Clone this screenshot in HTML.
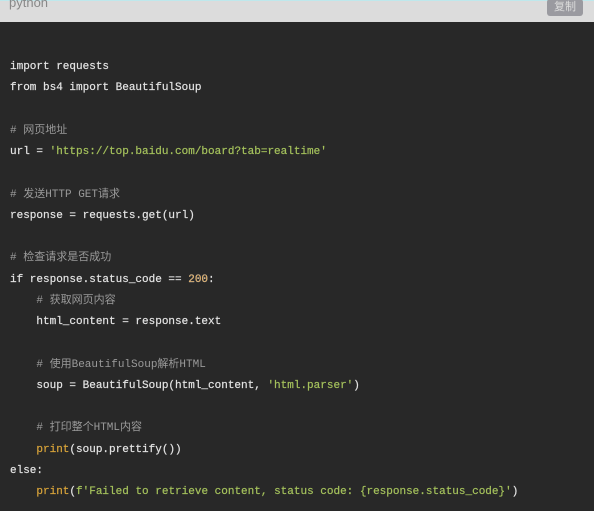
<!DOCTYPE html>
<html><head><meta charset="utf-8"><style>
html,body{margin:0;padding:0;width:600px;height:515px;background:#fff;overflow:hidden}
.hd{position:absolute;left:0;top:0;width:594px;height:21px;background:#dcdcdc;border-top:1px solid #bfe8ec}
.hd .l{position:absolute;left:9px;top:-6px;font:13px "Liberation Sans",sans-serif;color:#888}
.hd .b{position:absolute;left:547px;top:-2px;width:36px;height:17px;background:#9a9aa0;border-radius:3px;color:#ddd;font:11px "Noto Sans CJK SC",sans-serif;text-align:center;line-height:14px}
.code{position:absolute;left:0;top:22px;width:594px;height:489px;background:#282828}
pre{margin:0;position:absolute;left:10px;top:57px;font:11px/21.25px "Liberation Mono","Noto Sans CJK SC",monospace;color:#e4e4e4;-webkit-text-stroke:0.2px #e4e4e4}
.c{color:#9a9a9a;-webkit-text-stroke:0}.s{color:#a5c25c;-webkit-text-stroke:0.2px #a5c25c}.n{color:#e6a03c}.f{color:#d9a43a;-webkit-text-stroke:0.2px #d9a43a}
</style></head><body>
<div class="hd"><span class="l">python</span><span class="b">复制</span></div>
<div class="code"></div>
<pre>import requests
from bs4 import BeautifulSoup

<span class="c"># 网页地址</span>
url = <span class="s">'https://top.baidu.com/board?tab=realtime'</span>

<span class="c"># 发送HTTP GET请求</span>
response = requests.get(url)

<span class="c"># 检查请求是否成功</span>
if response.status_code == <span class="n">200</span>:
    <span class="c"># 获取网页内容</span>
    html_content = response.text

    <span class="c"># 使用BeautifulSoup解析HTML</span>
    soup = BeautifulSoup(html_content, <span class="s">'html.parser'</span>)

    <span class="c"># 打印整个HTML内容</span>
    <span class="f">print</span>(soup.prettify())
else:
    <span class="f">print</span>(<span class="s">f'Failed to retrieve content, status code: {response.status_code}'</span>)</pre>
</body></html>
